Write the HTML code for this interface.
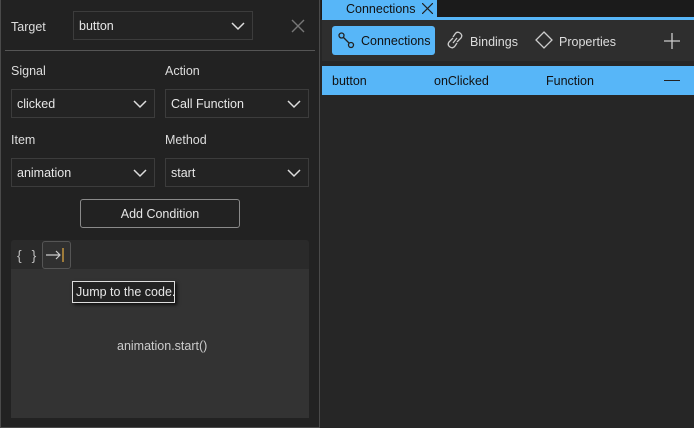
<!DOCTYPE html>
<html><head><style>
*{box-sizing:border-box;margin:0;padding:0}
body{width:694px;height:428px;background:#262626;font-family:"Liberation Sans",sans-serif;font-size:12px;color:#e6e6e6;position:relative;overflow:hidden}
.abs{position:absolute}
.left{left:0;top:0;width:320px;height:428px;background:#222;border-right:1px solid #4a4a4a;border-left:1px solid #4a4a4a;border-bottom:1px solid #4a4a4a}
.lbl{position:absolute;font-size:12.5px;color:#ddd}
.combo{position:absolute;height:29px;border:1px solid #3c3c3c;background:#232323;padding:0 5px;line-height:29px;font-size:12.5px;color:#e6e6e6;white-space:nowrap}
.combo svg{position:absolute;right:7px;top:10px}
</style></head><body>
<div class="abs left">
  <div class="lbl" style="left:10px;top:20px">Target</div>
  <div class="combo" style="left:72px;top:11px;width:180px">button<svg width="14" height="9"><path d="M1 1 L7 7 L13 1" stroke="#ddd" stroke-width="1.5" fill="none"/></svg></div>
  <svg class="abs" style="left:290px;top:19px" width="14" height="14"><path d="M1 1L13 13M13 1L1 13" stroke="#777" stroke-width="1.4"/></svg>
  <div class="abs" style="left:4px;top:50px;width:310px;height:1px;background:#555"></div>
  <div class="lbl" style="left:10px;top:64px">Signal</div>
  <div class="lbl" style="left:164px;top:64px">Action</div>
  <div class="combo" style="left:10px;top:89px;width:144px">clicked<svg width="14" height="9"><path d="M1 1 L7 7 L13 1" stroke="#ddd" stroke-width="1.5" fill="none"/></svg></div>
  <div class="combo" style="left:164px;top:89px;width:144px">Call Function<svg width="14" height="9"><path d="M1 1 L7 7 L13 1" stroke="#ddd" stroke-width="1.5" fill="none"/></svg></div>
  <div class="lbl" style="left:10px;top:133px">Item</div>
  <div class="lbl" style="left:164px;top:133px">Method</div>
  <div class="combo" style="left:10px;top:158px;width:144px">animation<svg width="14" height="9"><path d="M1 1 L7 7 L13 1" stroke="#ddd" stroke-width="1.5" fill="none"/></svg></div>
  <div class="combo" style="left:164px;top:158px;width:144px">start<svg width="14" height="9"><path d="M1 1 L7 7 L13 1" stroke="#ddd" stroke-width="1.5" fill="none"/></svg></div>
  <div class="abs" style="left:79px;top:199px;width:160px;height:29px;border:1px solid #8a8a8a;border-radius:3px;text-align:center;line-height:29px;font-size:12.5px">Add Condition</div>
  <div class="abs" style="left:10px;top:240px;width:298px;height:178px;background:#2a2a2a;border-radius:3px">
    <div class="abs" style="left:6px;top:7px;font-size:14px;color:#bbb;letter-spacing:3px">{ }</div>
    <div class="abs" style="left:31px;top:1px;width:29px;height:28px;border:1px solid #555;border-radius:3px;background:#303030"><svg width="27" height="26"><path d="M3 13H17M13 9L17 13L13 17" stroke="#ccc" stroke-width="1.2" fill="none"/><path d="M20 6V20" stroke="#d9a441" stroke-width="1.3"/></svg></div>
    <div class="abs" style="left:0;top:29px;width:298px;height:149px;background:#333"></div>
    <div class="abs" style="left:106px;top:99px;font-size:12.5px;color:#ccc">animation.start()</div>
    <div class="abs" style="left:61px;top:41px;width:103px;height:22px;border:1px solid #ddd;background:#222;font-size:12.5px;line-height:20px;padding-left:3px;box-shadow:2px 2px 3px #111;white-space:nowrap">Jump to the code.</div>
  </div>
</div>
<div class="abs" style="left:321px;top:0;width:373px;height:19px;background:#1b1b1b"></div>
<div class="abs" style="left:322px;top:0;width:115px;height:19px;background:#57b6f8;color:#111;font-size:12.5px;line-height:19px;padding-left:24px">Connections<svg class="abs" style="left:100px;top:3px" width="11" height="11"><path d="M0 0L11 11M11 0L0 11" stroke="#222" stroke-width="1.2"/></svg></div>
<div class="abs" style="left:322px;top:17px;width:372px;height:3px;background:#57b6f8"></div>
<div class="abs" style="left:322px;top:20px;width:372px;height:41px;background:#2e2e2e"></div>
<div class="abs" style="left:332px;top:26px;width:103px;height:29px;background:#57b6f8;border-radius:3px;color:#111;font-size:12.5px;line-height:31px;padding-left:29px">Connections<svg class="abs" style="left:6px;top:6px" width="18" height="18"><circle cx="3.5" cy="3.5" r="2.5" stroke="#222" fill="none" stroke-width="1.3"/><circle cx="13" cy="13" r="2.5" stroke="#222" fill="none" stroke-width="1.3"/><path d="M5.5 5.5L11 11" stroke="#222" stroke-width="1.3"/></svg></div>
<svg class="abs" style="left:446px;top:31px" width="18" height="19"><path d="M7 7L3 11Q1 14 4 16Q7 18 9 15L11 12M11 11L15 7Q17 4 14 2Q11 0 9 3L7 6M7 12L11 7" stroke="#ccc" fill="none" stroke-width="1.3"/></svg>
<div class="abs" style="left:470px;top:35px;font-size:12.5px;color:#ddd">Bindings</div>
<svg class="abs" style="left:535px;top:31px" width="18" height="18"><path d="M9 1L17 9L9 17L1 9Z" stroke="#ccc" fill="none" stroke-width="1.3"/></svg>
<div class="abs" style="left:559px;top:35px;font-size:12.5px;color:#ddd">Properties</div>
<svg class="abs" style="left:664px;top:33px" width="16" height="16"><path d="M8 0V16M0 8H16" stroke="#ccc" stroke-width="1.3"/></svg>
<div class="abs" style="left:322px;top:66px;width:372px;height:29px;background:#57b6f8;color:#111;font-size:12.5px;line-height:31px">
  <span class="abs" style="left:10px">button</span><span class="abs" style="left:112px">onClicked</span><span class="abs" style="left:224px">Function</span>
  <div class="abs" style="left:342px;top:14px;width:16px;height:1px;background:#222"></div>
</div>
</body></html>
